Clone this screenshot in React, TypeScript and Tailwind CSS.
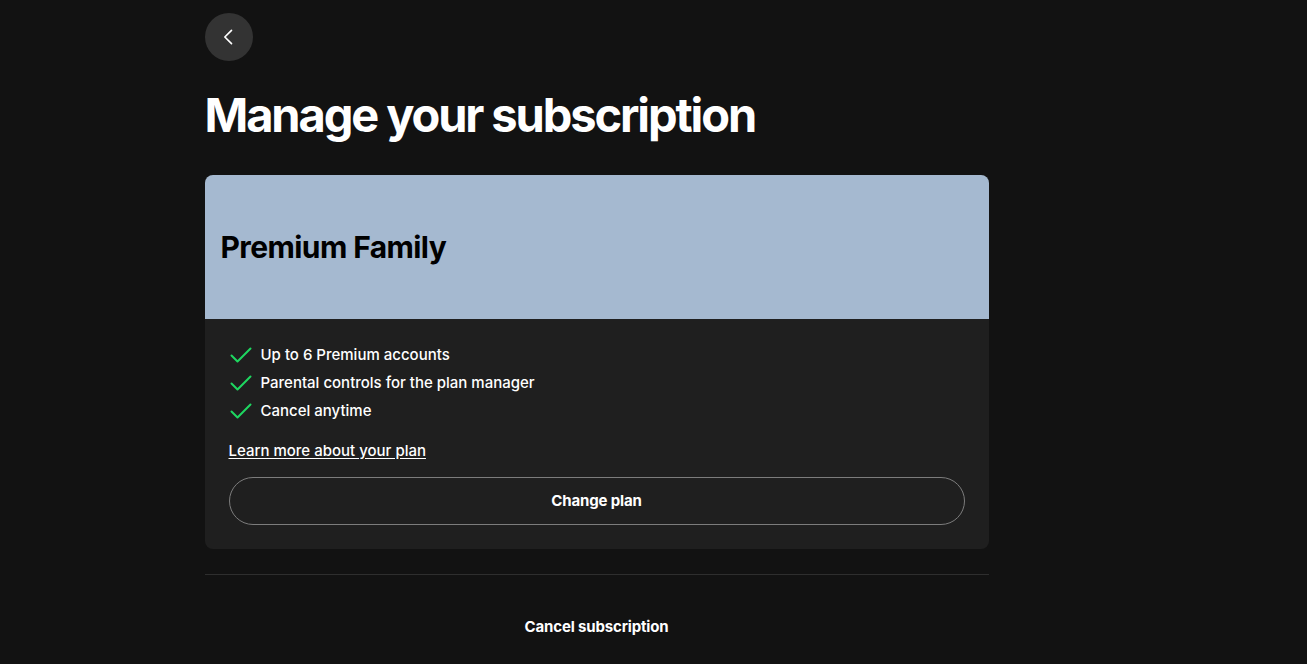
import { FC } from "react";

const features = [
    "Up to 6 Premium accounts",
    "Parental controls for the plan manager",
    "Cancel anytime",
];

const Check: FC = () => (
    <svg width="24" height="24" viewBox="0 0 24 24" fill="none" className="shrink-0">
        <path d="M2.5 12.5 L8.5 18.5 L21.5 5.5" stroke="#1ed760" strokeWidth="2" strokeLinecap="round" strokeLinejoin="round" />
    </svg>
);

const App: FC = () => {
    return (
        <div
            className="min-h-screen w-full bg-[#121212] text-white"
            style={{ fontFamily: "Inter, 'Noto Sans', sans-serif" }}
        >
            <div className="mx-auto w-[784px] -translate-x-[57px] pt-[13px]">
                <button className="flex h-12 w-12 items-center justify-center rounded-full bg-[#333333]">
                    <svg width="20" height="20" viewBox="0 0 24 24" fill="none">
                        <path d="M15 4 L7 12 L15 20" stroke="white" strokeWidth="2" strokeLinecap="round" strokeLinejoin="round" />
                    </svg>
                </button>

                <h1 className="mt-[26px] text-[47px] font-bold leading-[56px] tracking-[-0.045em]">
                    Manage your subscription
                </h1>

                <div className="mt-[32px] overflow-hidden rounded-lg bg-[#1f1f1f]">
                    <div className="flex h-[144px] items-center bg-[#a5b9d0] px-4">
                        <h2 className="text-[30px] font-bold tracking-[-0.02em] text-black">Premium Family</h2>
                    </div>
                    <div className="px-6 pb-6 pt-[22px]">
                        <ul className="flex flex-col">
                            {features.map((f) => (
                                <li key={f} className="flex h-7 items-center gap-2 text-[15px] font-medium">
                                    <Check />
                                    <span>{f}</span>
                                </li>
                            ))}
                        </ul>
                        <a href="#" className="mt-4 block text-[15px] font-medium leading-5 underline underline-offset-2">
                            Learn more about your plan
                        </a>
                        <button className="mt-4 h-12 w-full rounded-full border border-[#7c7c7c] text-[15px] font-bold tracking-[-0.01em]">
                            Change plan
                        </button>
                    </div>
                </div>

                <div className="mt-[25px] h-px bg-[#2e2e2e]" />

                <div className="mt-[28px] flex justify-center">
                    <button className="h-12 text-[15px] font-bold tracking-[-0.01em]">Cancel subscription</button>
                </div>
            </div>
        </div>
    );
};

export default App;
